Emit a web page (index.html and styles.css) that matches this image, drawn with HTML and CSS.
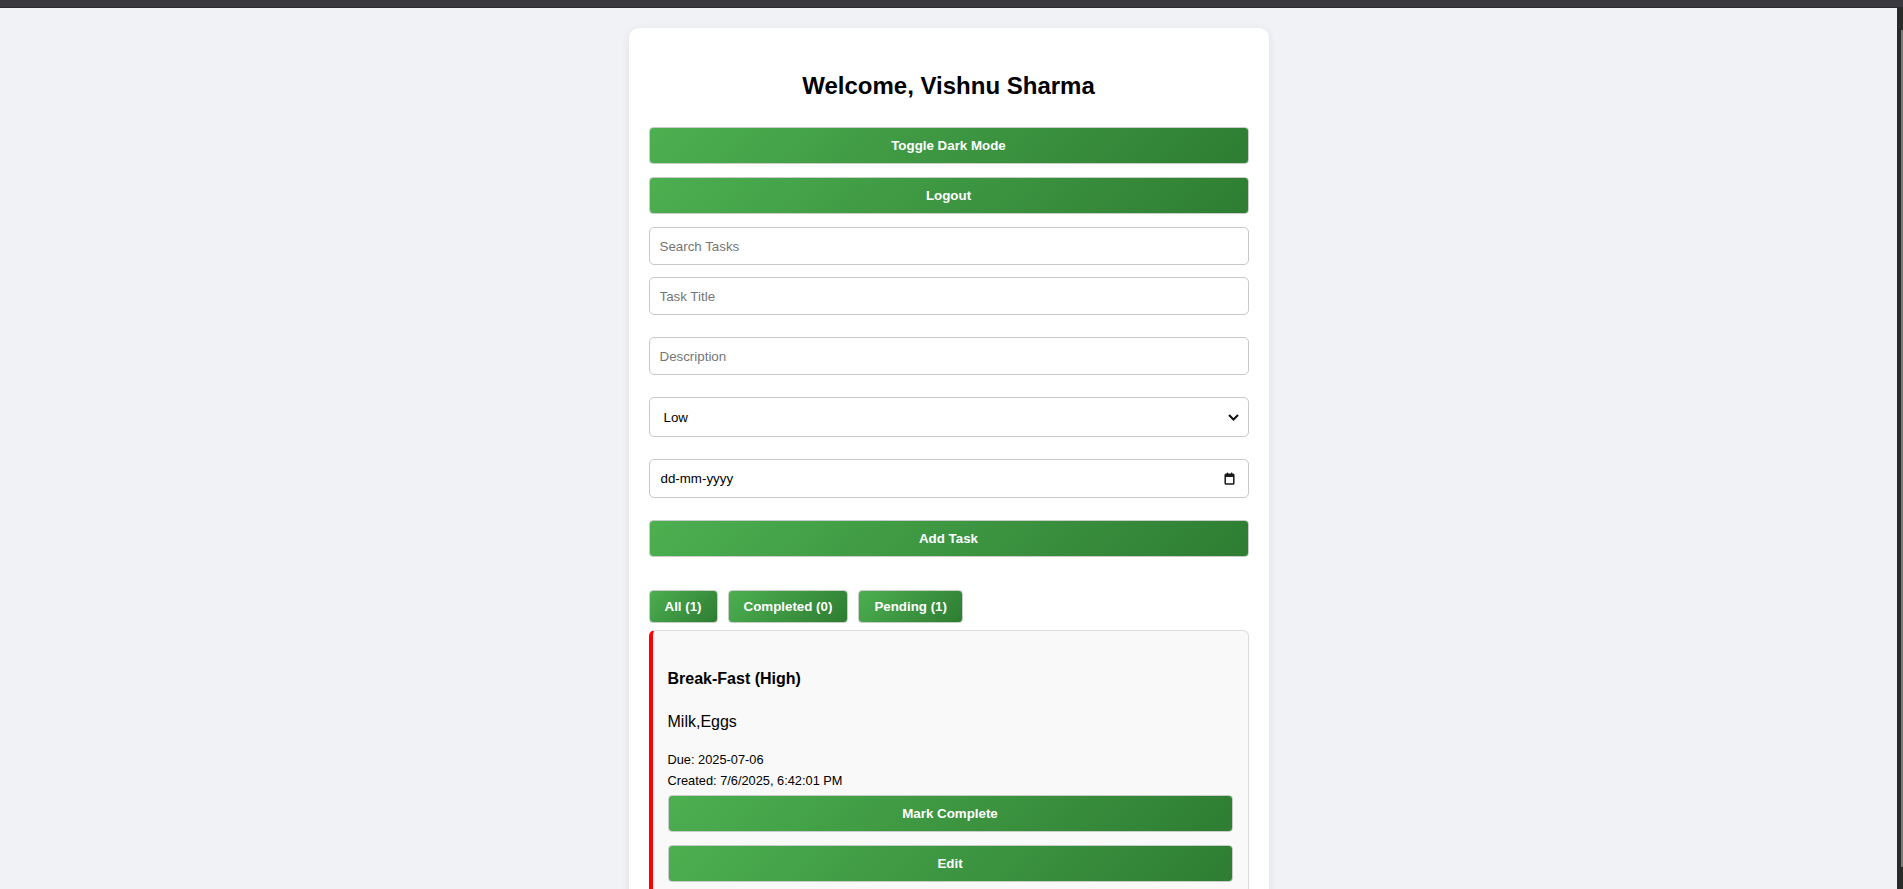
FILE: index.html
```html
<!DOCTYPE html>
<html lang="en">
<head>
<meta charset="utf-8">
<title>Task Manager</title>
<link rel="stylesheet" href="styles.css">
</head>
<body>
<div class="topbar"></div>
<div class="scrollbar"><div class="scroll-thumb"></div></div>
<main class="page">
  <section class="card">
    <h1 class="title">Welcome, Vishnu Sharma</h1>
    <button class="btn btn-stack">Toggle Dark Mode</button>
    <button class="btn btn-stack">Logout</button>
    <input class="field gap-sm" type="text" placeholder="Search Tasks">
    <input class="field gap-lg" type="text" placeholder="Task Title">
    <input class="field gap-lg" type="text" placeholder="Description">
    <div class="field field-select gap-lg">
      <span>Low</span>
      <svg class="chev" width="11" height="7" viewBox="0 0 11 7"><path d="M1 1 L5.5 5.5 L10 1" fill="none" stroke="#111" stroke-width="2"/></svg>
    </div>
    <div class="field field-date gap-lg">
      <span>dd-mm-yyyy</span>
      <svg class="cal" width="11" height="13" viewBox="0 0 11 13"><rect x="1.2" y="2.2" width="8.6" height="9.8" rx="0.8" fill="none" stroke="#1a1a1a" stroke-width="1.5"/><rect x="1.2" y="2.2" width="8.6" height="2.8" fill="#1a1a1a"/><rect x="2.8" y="0.6" width="1.3" height="2.2" fill="#1a1a1a"/><rect x="6.9" y="0.6" width="1.3" height="2.2" fill="#1a1a1a"/></svg>
    </div>
    <button class="btn">Add Task</button>

    <div class="filters">
      <button class="btn btn-filter">All (1)</button>
      <button class="btn btn-filter">Completed (0)</button>
      <button class="btn btn-filter">Pending (1)</button>
    </div>

    <article class="task high">
      <h3 class="task-title">Break-Fast (High)</h3>
      <p class="task-desc">Milk,Eggs</p>
      <p class="task-meta">Due: 2025-07-06</p>
      <p class="task-meta last">Created: 7/6/2025, 6:42:01 PM</p>
      <button class="btn btn-stack">Mark Complete</button>
      <button class="btn btn-stack">Edit</button>
      <button class="btn btn-stack">Delete</button>
    </article>
  </section>
</main>
</body>
</html>
```

FILE: styles.css
```css
* { box-sizing: border-box; }

html, body {
  margin: 0;
  padding: 0;
  height: 100%;
  overflow: hidden;
}

body {
  background: #f0f2f5;
  font-family: "Liberation Sans", Arial, sans-serif;
  color: #000;
}

.topbar {
  height: 8px;
  background: #3a393f;
  border-bottom: 1px solid #2b2a2f;
}

.scrollbar {
  position: fixed;
  top: 8px;
  right: 0;
  width: 6px;
  bottom: 0;
  background: #2a2a2a;
}

.scroll-thumb {
  position: absolute;
  right: 0;
  top: 22px;
  bottom: 22px;
  width: 2px;
  background: #7a7a7a;
}

.page {
  padding: 20px 6px 0 0;
}

.card {
  width: 640px;
  margin: 0 auto;
  background: #fff;
  border-radius: 10px;
  padding: 20px;
  box-shadow: 0 2px 10px rgba(0, 0, 0, 0.08);
  display: flex;
  flex-direction: column;
  min-height: 900px;
}

.title {
  margin: 24px 0 27px;
  font-size: 24px;
  line-height: 28px;
  font-weight: bold;
  text-align: center;
}

.btn {
  display: block;
  width: 100%;
  height: 37px;
  border: 1px solid #c9cdc9;
  border-radius: 4px;
  background: linear-gradient(135deg, #4caf50, #2e7d32);
  color: #fff;
  font-family: "Liberation Sans", Arial, sans-serif;
  font-size: 13.33px;
  font-weight: bold;
  padding: 0;
  cursor: pointer;
}

.btn-stack { margin-bottom: 13px; }

.field {
  display: block;
  width: 100%;
  height: 38px;
  border: 1px solid #c8c8c8;
  border-radius: 5px;
  background: #fff;
  padding: 0 10px;
  font-family: "Liberation Sans", Arial, sans-serif;
  font-size: 13.33px;
  color: #000;
  outline: none;
}

.field::placeholder { color: #757575; }

.gap-sm { margin-bottom: 12px; }
.gap-lg { margin-bottom: 22px; }

.field-select {
  height: 40px;
  display: flex;
  align-items: center;
  justify-content: space-between;
  padding: 0 9px 0 14px;
}

.field-date {
  height: 39px;
  display: flex;
  align-items: center;
  justify-content: space-between;
  padding: 0 13px 0 11px;
}

.filters {
  display: flex;
  gap: 10px;
  margin-top: 33px;
  margin-bottom: 7px;
}

.btn-filter {
  width: auto;
  height: 33px;
  padding: 0 15px;
}

.task {
  background: #f9f9f9;
  border: 1px solid #dcdcdc;
  border-left: 4px solid #ff0000;
  border-radius: 6px;
  padding: 15px;
}

.task-title {
  margin: 23px 0 23px;
  font-size: 16px;
  line-height: 20px;
  font-weight: bold;
}

.task-desc {
  margin: 0 0 20px;
  font-size: 16px;
  line-height: 20px;
}

.task-meta {
  margin: 0 0 5px;
  font-size: 12.8px;
  line-height: 16px;
}

.task-meta.last { margin-bottom: 6px; }
```
